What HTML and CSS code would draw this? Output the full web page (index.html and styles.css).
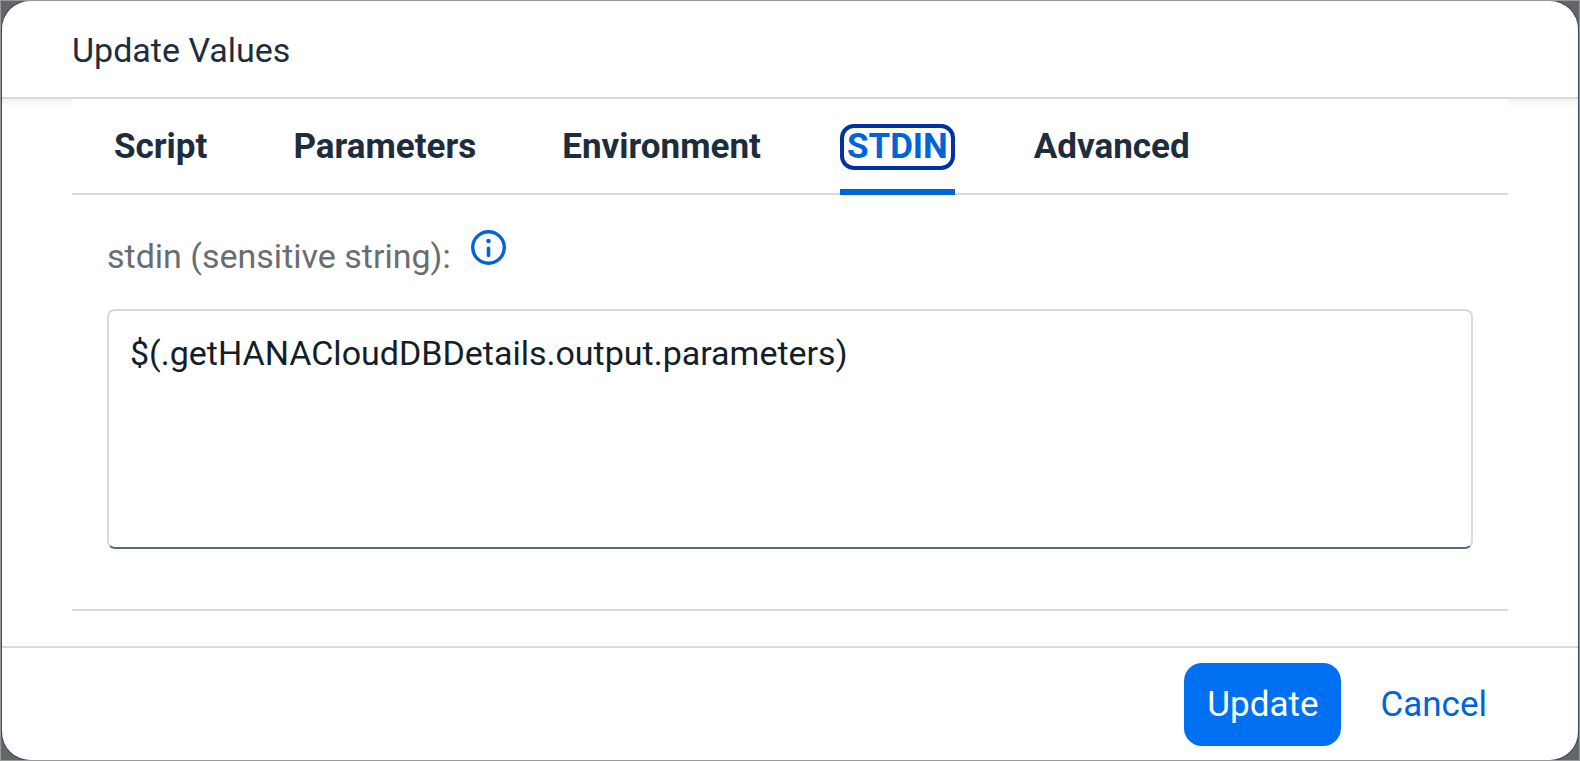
FILE: index.html
```html
<!DOCTYPE html>
<html lang="en">
<head>
<meta charset="utf-8">
<title>Update Values</title>
<link rel="stylesheet" href="styles.css">
</head>
<body>
<div class="backdrop">
  <section class="dialog" role="dialog" aria-labelledby="dialog-title">
    <header class="dialog-header">
      <h1 class="dialog-title" id="dialog-title">Update Values</h1>
    </header>
    <main class="dialog-body">
      <div class="panel">
        <div class="tabs" role="tablist">
          <button class="tab" role="tab" type="button"><span class="tab-text">Script</span></button>
          <button class="tab" role="tab" type="button"><span class="tab-text">Parameters</span></button>
          <button class="tab" role="tab" type="button"><span class="tab-text">Environment</span></button>
          <button class="tab tab-selected" role="tab" type="button" aria-selected="true"><span class="tab-text">STDIN</span></button>
          <button class="tab" role="tab" type="button"><span class="tab-text">Advanced</span></button>
        </div>
        <div class="tab-content">
          <div class="field-head">
            <label class="field-label" for="stdin">stdin (sensitive string):</label>
            <button class="info" type="button" aria-label="Information">
              <svg class="info-icon" viewBox="0 0 35 35" aria-hidden="true">
                <circle cx="17.5" cy="17.5" r="15.8" fill="none" stroke="currentColor" stroke-width="3.4"/>
                <circle cx="17.5" cy="11" r="2.3" fill="currentColor"/>
                <path d="M17.5 18.4v7" fill="none" stroke="currentColor" stroke-width="3.6" stroke-linecap="round"/>
              </svg>
            </button>
          </div>
          <textarea class="field-input" id="stdin" spellcheck="false">$(.getHANACloudDBDetails.output.parameters)</textarea>
        </div>
      </div>
    </main>
    <footer class="dialog-footer">
      <button class="button button-primary" type="button">Update</button>
      <button class="button" type="button">Cancel</button>
    </footer>
  </section>
</div>
</body>
</html>
```
FILE: styles.css
```css
* {
  box-sizing: border-box;
}

body {
  margin: 0;
  font-family: Roboto, "Noto Sans", sans-serif;
  font-size: 34px;
  line-height: 40px;
  color: #1d2d3e;
}

button,
textarea {
  margin: 0;
  font: inherit;
}

button {
  padding: 0;
  border: 0;
  background: none;
  cursor: pointer;
}

.backdrop {
  display: flex;
  min-height: 100vh;
  padding: 0 1px;
  border: 1px solid #999;
  background: #646669;
  overflow: hidden;
}

.dialog {
  flex: 1;
  display: flex;
  flex-direction: column;
  min-width: 0;
  border-radius: 28px;
  background: #fff;
  box-shadow: 0 0 0 1px #354a5f;
  overflow: hidden;
}

.dialog-header {
  display: flex;
  align-items: center;
  height: 98px;
  padding: 2px 70px 0;
  border-bottom: 2px solid #d9d9d9;
}

.dialog-title {
  margin: 0;
  font-size: 34px;
  font-weight: 400;
}

.dialog-body {
  flex: 1;
  display: flex;
  flex-direction: column;
  padding: 0 70px 35px;
  background: linear-gradient(#f2f2f2, #fff 8px);
}

.panel {
  flex: 1;
  display: flex;
  flex-direction: column;
  border-bottom: 2px solid #d9d9d9;
  background: #fff;
}

.tabs {
  display: flex;
  gap: 72px;
  height: 96px;
  padding: 0 35px;
  border-bottom: 2px solid #d9d9d9;
}

.tab {
  height: 96px;
  padding: 25px 0 19px;
  border-bottom: 6px solid transparent;
  color: #1d2d3e;
  font-size: 35px;
  font-weight: 700;
}

.tab-text {
  display: block;
  height: 46px;
  padding: 0 3px;
  border: 4px solid transparent;
  border-radius: 14px;
  line-height: 38px;
}

.tab-selected {
  border-bottom-color: #0064d9;
  color: #0064d9;
}

.tab-selected .tab-text {
  border-color: #0032a5;
}

.tab-content {
  flex: 1;
  display: flex;
  flex-direction: column;
  gap: 34px;
  padding: 35px 35px 60px;
}

.field-head {
  display: flex;
  align-items: flex-start;
  gap: 20px;
  height: 45px;
}

.field-label {
  padding-top: 6px;
  color: #6a6d70;
}

.info {
  display: flex;
  color: #0064d9;
}

.info-icon {
  width: 35px;
  height: 35px;
}

.field-input {
  display: block;
  flex: 1;
  width: 100%;
  min-height: 160px;
  padding: 22px 21px;
  border: 2px solid #d5dadf;
  border-bottom-color: #556b81;
  border-radius: 8px;
  background: #fff;
  color: #131e29;
  outline: 0;
  resize: none;
}

.dialog-footer {
  display: flex;
  align-items: center;
  justify-content: flex-end;
  gap: 16px;
  height: 114px;
  padding: 0 68px;
  border-top: 2px solid #d9d9d9;
}

.button {
  height: 83px;
  padding: 2px 23px 0;
  border-radius: 18px;
  color: #0064d9;
  font-size: 35px;
}

.button-primary {
  background: #0070f2;
  color: #fff;
}
```
